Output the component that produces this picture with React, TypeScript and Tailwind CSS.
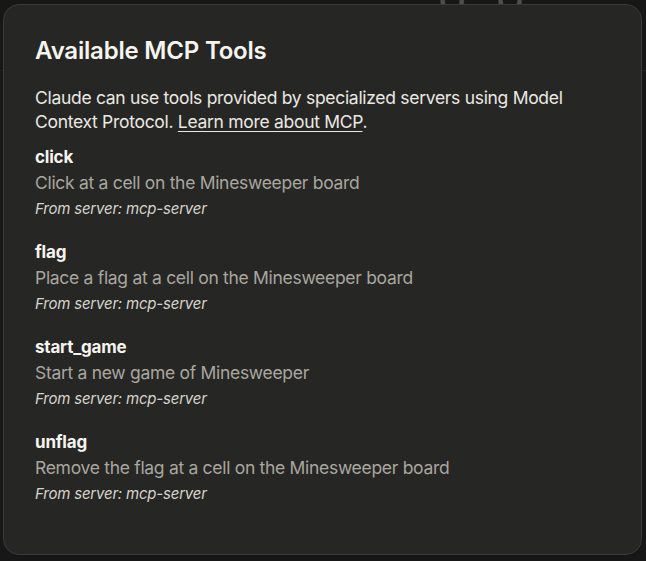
const tools = [
  { name: "click", description: "Click at a cell on the Minesweeper board" },
  { name: "flag", description: "Place a flag at a cell on the Minesweeper board" },
  { name: "start_game", description: "Start a new game of Minesweeper" },
  { name: "unflag", description: "Remove the flag at a cell on the Minesweeper board" },
];

export default function App() {
  return (
    <div className="relative h-[561px] w-[646px] overflow-hidden bg-[#171717] font-['Inter',sans-serif]">
      {/* page behind the dialog, dimmed */}
      <p className="absolute left-[438px] top-[-40px] text-[48px] text-[#4f4f4c]">g, p</p>
      <div className="absolute left-0 top-[70px] h-px w-full bg-[#222]" />

      <div className="relative ml-[3px] mt-[4px] flex h-[551px] w-[639px] flex-col rounded-[16px] border border-[#3a3a38] bg-[#262625] px-[31px] pt-[30px]">
        <h2 className="text-[24px] font-semibold leading-[32px] tracking-[-0.2px] text-[#f5f4ee]">Available MCP Tools</h2>
        <p className="mt-[19px] text-[17.5px] leading-[24px] tracking-[-0.3px] text-[#ebe9e2]">
          Claude can use tools provided by specialized servers using Model Context Protocol.{" "}
          <span className="underline underline-offset-[3px]">Learn more about MCP</span>.
        </p>
        <div className="mt-[12px] flex flex-col gap-[22px]">
          {tools.map((tool) => (
            <div key={tool.name} className="flex flex-col">
              <p className="text-[17px] font-bold leading-[22px] tracking-[-0.2px] text-[#f5f4ee]">{tool.name}</p>
              <p className="mt-[4px] text-[17.5px] leading-[22px] tracking-[-0.3px] text-[#a9a79f]">{tool.description}</p>
              <p className="mt-[5px] text-[15px] italic leading-[20px] tracking-[-0.2px] text-[#d6d4cc]">From server: mcp-server</p>
            </div>
          ))}
        </div>
      </div>
    </div>
  );
}
